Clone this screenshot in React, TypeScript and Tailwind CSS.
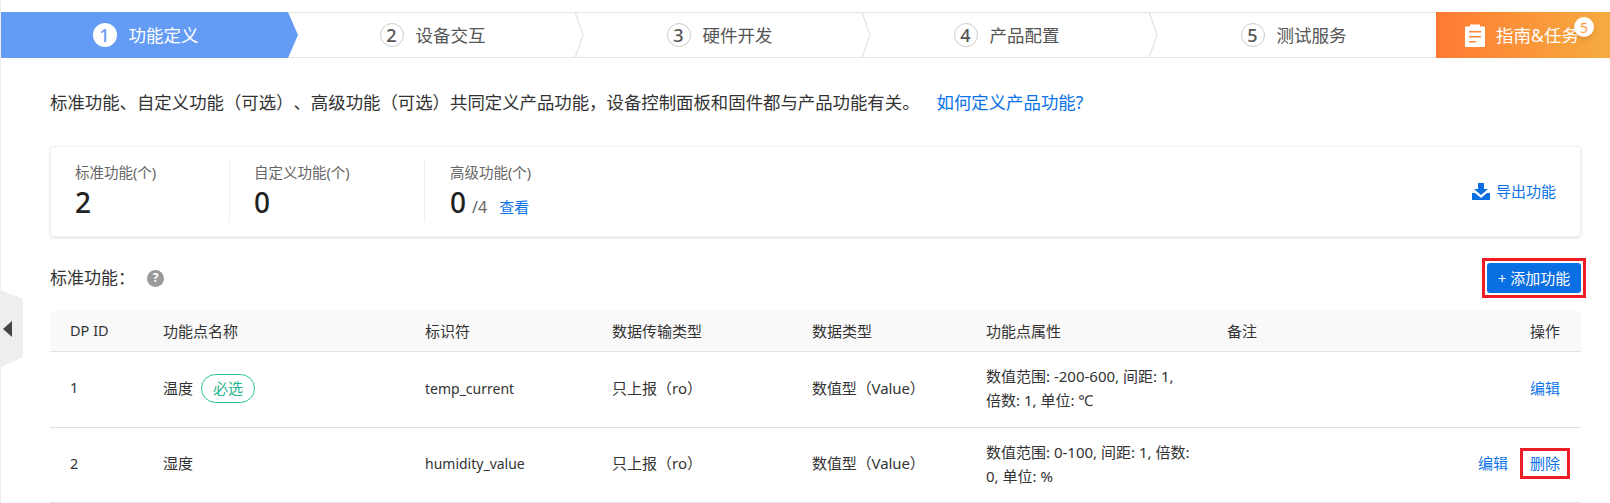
import React from 'react';

const steps = ['功能定义', '设备交互', '硬件开发', '产品配置', '测试服务'];

const headers = [
  { label: 'DP ID', cls: 'w-[93px] pl-5 text-[14.5px]' },
  { label: '功能点名称', cls: 'w-[262px] pl-5' },
  { label: '标识符', cls: 'w-[187px] pl-5' },
  { label: '数据传输类型', cls: 'w-[200px] pl-5' },
  { label: '数据类型', cls: 'w-[174px] pl-5' },
  { label: '功能点属性', cls: 'w-[241px] pl-5' },
  { label: '备注', cls: 'w-[193px] pl-5' },
  { label: '操作', cls: 'pr-[21px] text-right' },
];

const rows = [
  {
    id: 1,
    name: '温度',
    required: true,
    code: 'temp_current',
    prop: ['数值范围: -200-600, 间距: 1,', '倍数: 1, 单位: ℃'],
    canDelete: false,
    rowCls: 'h-[76px]',
  },
  {
    id: 2,
    name: '湿度',
    required: false,
    code: 'humidity_value',
    prop: ['数值范围: 0-100, 间距: 1, 倍数:', '0, 单位: %'],
    canDelete: true,
    rowCls: 'h-[75px]',
  },
];

const stats = [
  { label: '标准功能(个)', value: '2', cls: 'w-[179px] pl-6 border-r border-[#eeeeee]' },
  { label: '自定义功能(个)', value: '0', cls: 'w-[195px] pl-6 border-r border-[#eeeeee]' },
];

const Step: React.FC<{ n: number; label: string; active: boolean }> = ({ n, label, active }) => (
  <div
    className={`relative flex h-full w-[287px] items-center justify-center gap-3 pl-[2px] ${
      active ? 'z-10 bg-[#649cf5] text-white' : 'border-y border-[#e4e4e4] text-[#555555]'
    }`}
  >
    <span
      className={`flex h-6 w-6 items-center justify-center rounded-full text-[18px] font-medium ${
        active ? 'bg-white text-[#649cf5]' : 'border border-[#cccccc] text-[#555555]'
      }`}
    >
      {n}
    </span>
    <span className="text-[17.5px]">{label}</span>
    {active ? (
      <svg className="absolute -right-[10px] top-0 h-[46px] w-[10px]" viewBox="0 0 10 46">
        <path d="M0 0 L10 23 L0 46 Z" fill="#649cf5" />
      </svg>
    ) : (
      n < 5 && (
        <svg className="absolute -right-[9px] -top-px z-10 h-[46px] w-[10px]" viewBox="0 0 10 46">
          <path d="M1 0 L9 23 L1 46" fill="#ffffff" stroke="#e4e4e4" strokeWidth="1.3" />
        </svg>
      )
    )}
  </div>
);

export default function App() {
  return (
    <div
      className="relative h-[503px] w-[1610px] overflow-hidden border-l border-[#eeeeee] bg-white text-[#333333] [text-spacing-trim:space-all]"
      style={{ fontFamily: '"Noto Sans", "Noto Sans CJK SC", sans-serif' }}
    >
      <div className="pt-3">
        <div className="flex h-[46px]">
          {steps.map((s, i) => (
            <Step key={s} n={i + 1} label={s} active={i === 0} />
          ))}
          <div className="relative flex flex-1 items-center justify-center gap-[11px] bg-gradient-to-r from-[#ff7a33] to-[#f5ab40] pl-[6px] pr-2 text-white">
            <svg className="h-[23px] w-5" viewBox="0 0 20 23">
              <path
                fill="#ffffff"
                fillRule="evenodd"
                d="M5 0.5h10v2h4a1 1 0 0 1 1 1V22a1 1 0 0 1-1 1H1a1 1 0 0 1-1-1V3.5a1 1 0 0 1 1-1h4z M4 7v1.6h12V7z M4 12v1.6h12V12z M4 17v1.6h7V17z"
              />
            </svg>
            <span className="whitespace-nowrap text-[17.5px]">指南&amp;任务</span>
            <span className="absolute left-[138px] top-[5px] flex h-5 w-5 items-center justify-center rounded-full bg-white text-[14px] text-[#ff9a3c] shadow-md">
              5
            </span>
          </div>
        </div>
      </div>

      <div className="absolute left-0 top-[290px] h-[77px] w-[22px]">
        <svg className="h-full w-full" viewBox="0 0 22 77">
          <path d="M0 0 L22 9 L22 67 L0 77 Z" fill="#eceef0" />
          <path d="M11 31 L11 47 L2 39 Z" fill="#444444" />
        </svg>
      </div>

      <div className="pl-[49px] pr-[29px]">
        <p className="mt-[31px] flex h-[26px] items-center text-[17.4px] leading-[26px]">
          标准功能、自定义功能（可选）、高级功能（可选）共同定义产品功能，设备控制面板和固件都与产品功能有关。
          <a className="ml-[17px] text-[#0b73e8]">如何定义产品功能?</a>
        </p>

        <div className="mt-[31px] flex h-[91px] items-center rounded border border-[#efefef] shadow-[0_1px_3px_rgba(0,0,0,0.12)]">
          {stats.map((st) => (
            <div key={st.label} className={`h-[61px] ${st.cls}`}>
              <div className="mt-px text-[14.5px] leading-5 text-[#666666]">{st.label}</div>
              <div className="mt-[2px] text-[28px] font-medium leading-[36px] text-[#222222]">{st.value}</div>
            </div>
          ))}
          <div className="h-[61px] pl-[25px]">
            <div className="mt-px text-[14.5px] leading-5 text-[#666666]">高级功能(个)</div>
            <div className="mt-[2px] flex items-baseline leading-[36px]">
              <span className="text-[28px] font-medium text-[#222222]">0</span>
              <span className="ml-[6px] text-[16px] text-[#666666]">/4</span>
              <a className="ml-3 text-[15px] text-[#0b73e8]">查看</a>
            </div>
          </div>
          <a className="ml-auto mr-6 flex items-center gap-[6px] text-[15px] text-[#0b73e8]">
            <svg className="h-[17px] w-[18px]" viewBox="0 0 18 17">
              <path fill="#0b6fe0" d="M6 0h6v6h4L9 12 2 6h4z" />
              <path fill="#0b6fe0" d="M0 10h3l6 5 6-5h3v7H0z" />
            </svg>
            导出功能
          </a>
        </div>

        <div className="mt-[26px] flex h-[30px] items-center">
          <span className="text-[17px]">标准功能：</span>
          <span className="ml-[12px] flex h-[17px] w-[17px] items-center justify-center rounded-full bg-[#9c9a98] text-[12px] font-bold text-white">
            ?
          </span>
          <div className="ml-auto outline-[3px] outline-offset-2 outline-[#ee1c25]">
            <button className="block h-[30px] w-[94px] rounded-[3px] bg-[#0a6fe2] text-[15px] text-white">
              + 添加功能
            </button>
          </div>
        </div>

        <table className="mt-[18px] w-full table-fixed border-collapse text-[15px]">
          <thead>
            <tr className="h-10 border-b border-[#e2e2e2] bg-[#f9f9f9]">
              {headers.map((h) => (
                <th key={h.label} className={`font-normal text-left ${h.cls}`}>
                  {h.label}
                </th>
              ))}
            </tr>
          </thead>
          <tbody>
            {rows.map((r) => (
              <tr key={r.id} className={`border-b border-[#e2e2e2] ${r.rowCls}`}>
                <td className="pb-[2px] pl-5 text-[14.5px]">{r.id}</td>
                <td className="pb-[2px] pl-5">
                  <div className="flex items-center gap-2">
                    {r.name}
                    {r.required && (
                      <span className="flex h-[29px] w-[54px] items-center justify-center rounded-full border border-[#2ec29b] text-[#1fb58c]">
                        必选
                      </span>
                    )}
                  </div>
                </td>
                <td className="pb-[2px] pl-5 text-[14px]">{r.code}</td>
                <td className="pb-[2px] pl-5">只上报（ro）</td>
                <td className="pb-[2px] pl-5 tracking-[-0.1px]">数值型（Value）</td>
                <td className="pb-[2px] pl-5 leading-6">
                  {r.prop.map((line) => (
                    <div key={line} className="whitespace-nowrap">
                      {line}
                    </div>
                  ))}
                </td>
                <td />
                <td className="pb-[2px] pr-[21px]">
                  <div className="flex items-center justify-end text-[#0b73e8]">
                    <a>编辑</a>
                    {r.canDelete && (
                      <a className="-mr-[5px] ml-[17px] px-[5px] leading-[21px] outline-[3px] outline-offset-2 outline-[#ee1c25]">
                        删除
                      </a>
                    )}
                  </div>
                </td>
              </tr>
            ))}
          </tbody>
        </table>
      </div>
    </div>
  );
}
